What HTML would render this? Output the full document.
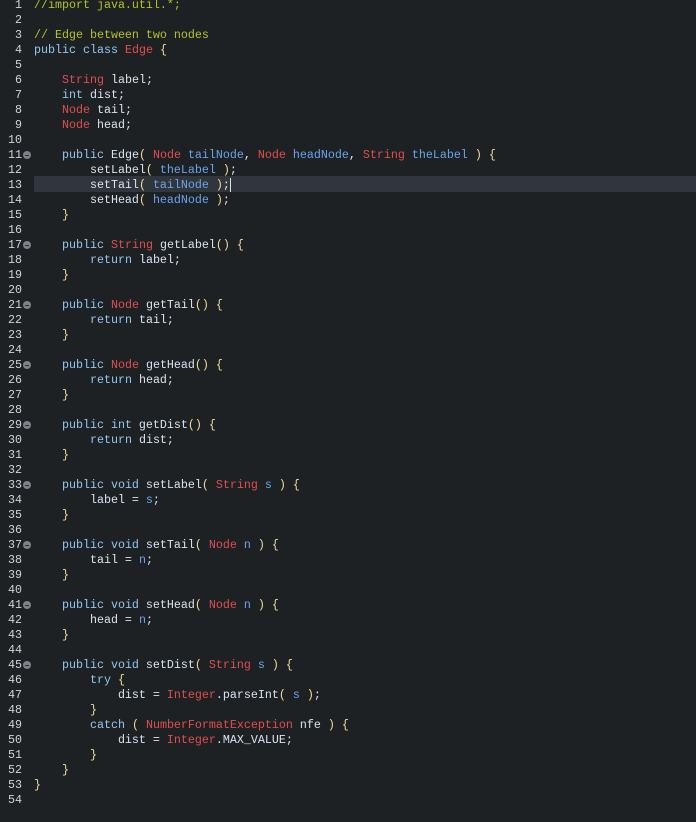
<!DOCTYPE html>
<html><head><style>
html,body{margin:0;padding:0;background:#1e2124;width:696px;height:822px;overflow:hidden}
.c{position:absolute;top:-2px;left:0;width:696px;font-family:"Liberation Mono",monospace;font-size:11.67px;line-height:15px;color:#d9e4ee}
.l{height:15px;position:relative;white-space:pre}
.n{position:absolute;left:0;width:22px;text-align:right;color:#d0d4d8}
.t{position:absolute;left:34px}
.f::after{content:"";position:absolute;left:23px;top:3px;width:8px;height:8px;border-radius:50%;background:#7d8288}
.f::before{content:"";position:absolute;left:25px;top:7px;width:4px;height:1px;background:#2a2d31;z-index:1}
.hl{background:#31363c;position:absolute;left:34px;right:0;top:-2px;bottom:1px}
.k{color:#93c7ef}.ty{color:#e04e4e}.p{color:#6aa3ec}.cm{color:#b3c227}.b{color:#f2dc98}
.cur{border-right:1px solid #e0e0e0}
</style></head><body><div class="c">
<div class="l"><span class="n">1</span><span class="t cm">//import java.util.*;</span></div>
<div class="l"><span class="n">2</span></div>
<div class="l"><span class="n">3</span><span class="t cm">// Edge between two nodes</span></div>
<div class="l"><span class="n">4</span><span class="t"><span class="k">public class</span> <span class="ty">Edge</span> <span class="b">{</span></span></div>
<div class="l"><span class="n">5</span></div>
<div class="l"><span class="n">6</span><span class="t">    <span class="ty">String</span> label;</span></div>
<div class="l"><span class="n">7</span><span class="t">    <span class="k">int</span> dist;</span></div>
<div class="l"><span class="n">8</span><span class="t">    <span class="ty">Node</span> tail;</span></div>
<div class="l"><span class="n">9</span><span class="t">    <span class="ty">Node</span> head;</span></div>
<div class="l"><span class="n">10</span></div>
<div class="l f"><span class="n">11</span><span class="t">    <span class="k">public</span> Edge<span class="b">(</span> <span class="ty">Node</span> <span class="p">tailNode</span>, <span class="ty">Node</span> <span class="p">headNode</span>, <span class="ty">String</span> <span class="p">theLabel</span> <span class="b">)</span> <span class="b">{</span></span></div>
<div class="l"><span class="n">12</span><span class="t">        setLabel<span class="b">(</span> <span class="p">theLabel</span> <span class="b">)</span>;</span></div>
<div class="l"><span class="hl"></span><span class="n">13</span><span class="t">        setTail<span class="b">(</span> <span class="p">tailNode</span> <span class="b">)</span><span class="cur">;</span></span></div>
<div class="l"><span class="n">14</span><span class="t">        setHead<span class="b">(</span> <span class="p">headNode</span> <span class="b">)</span>;</span></div>
<div class="l"><span class="n">15</span><span class="t">    <span class="b">}</span></span></div>
<div class="l"><span class="n">16</span></div>
<div class="l f"><span class="n">17</span><span class="t">    <span class="k">public</span> <span class="ty">String</span> getLabel<span class="b">()</span> <span class="b">{</span></span></div>
<div class="l"><span class="n">18</span><span class="t">        <span class="k">return</span> label;</span></div>
<div class="l"><span class="n">19</span><span class="t">    <span class="b">}</span></span></div>
<div class="l"><span class="n">20</span></div>
<div class="l f"><span class="n">21</span><span class="t">    <span class="k">public</span> <span class="ty">Node</span> getTail<span class="b">()</span> <span class="b">{</span></span></div>
<div class="l"><span class="n">22</span><span class="t">        <span class="k">return</span> tail;</span></div>
<div class="l"><span class="n">23</span><span class="t">    <span class="b">}</span></span></div>
<div class="l"><span class="n">24</span></div>
<div class="l f"><span class="n">25</span><span class="t">    <span class="k">public</span> <span class="ty">Node</span> getHead<span class="b">()</span> <span class="b">{</span></span></div>
<div class="l"><span class="n">26</span><span class="t">        <span class="k">return</span> head;</span></div>
<div class="l"><span class="n">27</span><span class="t">    <span class="b">}</span></span></div>
<div class="l"><span class="n">28</span></div>
<div class="l f"><span class="n">29</span><span class="t">    <span class="k">public int</span> getDist<span class="b">()</span> <span class="b">{</span></span></div>
<div class="l"><span class="n">30</span><span class="t">        <span class="k">return</span> dist;</span></div>
<div class="l"><span class="n">31</span><span class="t">    <span class="b">}</span></span></div>
<div class="l"><span class="n">32</span></div>
<div class="l f"><span class="n">33</span><span class="t">    <span class="k">public void</span> setLabel<span class="b">(</span> <span class="ty">String</span> <span class="p">s</span> <span class="b">)</span> <span class="b">{</span></span></div>
<div class="l"><span class="n">34</span><span class="t">        label = <span class="p">s</span>;</span></div>
<div class="l"><span class="n">35</span><span class="t">    <span class="b">}</span></span></div>
<div class="l"><span class="n">36</span></div>
<div class="l f"><span class="n">37</span><span class="t">    <span class="k">public void</span> setTail<span class="b">(</span> <span class="ty">Node</span> <span class="p">n</span> <span class="b">)</span> <span class="b">{</span></span></div>
<div class="l"><span class="n">38</span><span class="t">        tail = <span class="p">n</span>;</span></div>
<div class="l"><span class="n">39</span><span class="t">    <span class="b">}</span></span></div>
<div class="l"><span class="n">40</span></div>
<div class="l f"><span class="n">41</span><span class="t">    <span class="k">public void</span> setHead<span class="b">(</span> <span class="ty">Node</span> <span class="p">n</span> <span class="b">)</span> <span class="b">{</span></span></div>
<div class="l"><span class="n">42</span><span class="t">        head = <span class="p">n</span>;</span></div>
<div class="l"><span class="n">43</span><span class="t">    <span class="b">}</span></span></div>
<div class="l"><span class="n">44</span></div>
<div class="l f"><span class="n">45</span><span class="t">    <span class="k">public void</span> setDist<span class="b">(</span> <span class="ty">String</span> <span class="p">s</span> <span class="b">)</span> <span class="b">{</span></span></div>
<div class="l"><span class="n">46</span><span class="t">        <span class="k">try</span> <span class="b">{</span></span></div>
<div class="l"><span class="n">47</span><span class="t">            dist = <span class="ty">Integer</span>.parseInt<span class="b">(</span> <span class="p">s</span> <span class="b">)</span>;</span></div>
<div class="l"><span class="n">48</span><span class="t">        <span class="b">}</span></span></div>
<div class="l"><span class="n">49</span><span class="t">        <span class="k">catch</span> <span class="b">(</span> <span class="ty">NumberFormatException</span> nfe <span class="b">)</span> <span class="b">{</span></span></div>
<div class="l"><span class="n">50</span><span class="t">            dist = <span class="ty">Integer</span>.MAX_VALUE;</span></div>
<div class="l"><span class="n">51</span><span class="t">        <span class="b">}</span></span></div>
<div class="l"><span class="n">52</span><span class="t">    <span class="b">}</span></span></div>
<div class="l"><span class="n">53</span><span class="t"><span class="b">}</span></span></div>
<div class="l"><span class="n">54</span></div>
</div></body></html>
